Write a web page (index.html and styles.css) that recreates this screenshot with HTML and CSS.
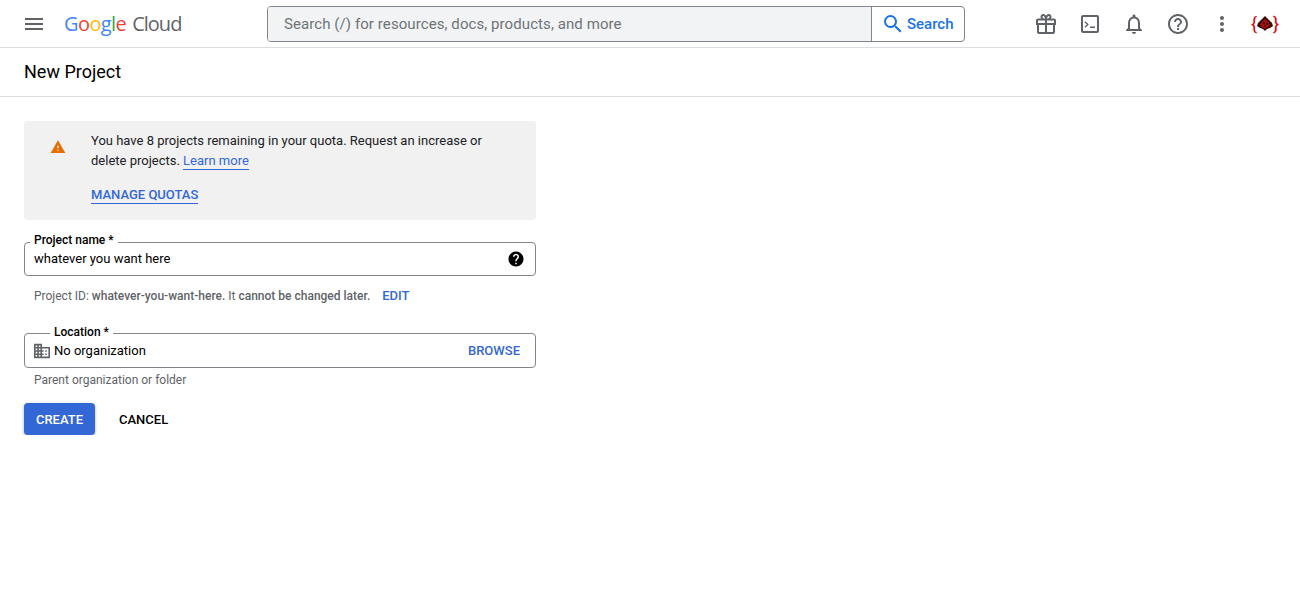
FILE: index.html
```html
<!DOCTYPE html>
<html lang="en">
<head>
  <meta charset="UTF-8" />
  <meta name="viewport" content="width=device-width, initial-scale=1.0" />
  <title>New Project</title>
  <link rel="stylesheet" href="styles.css">
</head>
<body>

  <!-- Top bar -->
  <header class="topbar">
    <button class="icon-btn menu-btn" aria-label="Menu">
      <svg width="24" height="24" viewBox="0 0 24 24"><path d="M3 18h18v-2H3v2zm0-5h18v-2H3v2zm0-7v2h18V6H3z"/></svg>
    </button>
    <div class="logo"><span class="blue">G</span><span class="red">o</span><span class="yellow">o</span><span class="blue">g</span><span class="green">l</span><span class="red">e</span><span class="cloud">Cloud</span></div>

    <form class="search">
      <div class="search-input">Search (/) for resources, docs, products, and more</div>
      <button class="search-btn" type="button">
        <svg width="24" height="24" viewBox="0 0 24 24"><path d="M15.5 14h-.79l-.28-.27A6.47 6.47 0 0 0 16 9.5 6.5 6.5 0 1 0 9.5 16c1.61 0 3.09-.59 4.23-1.57l.27.28v.79l5 4.99L20.49 19l-4.99-5zm-6 0C7.01 14 5 11.99 5 9.5S7.01 5 9.5 5 14 7.01 14 9.5 11.99 14 9.5 14z"/></svg>
        Search
      </button>
    </form>

    <div class="top-icons">
      <button class="icon-btn" aria-label="Gift">
        <svg width="24" height="24" viewBox="0 0 24 24"><path d="M20 6.500h-3.200c.4-.5.7-1.100.7-1.800C17.500 3.200 16.300 2 14.800 2c-1.100 0-2 .6-2.800 1.700C11.200 2.600 10.300 2 9.200 2 7.700 2 6.500 3.200 6.500 4.700c0 .7.300 1.300.7 1.800H4c-1.100 0-2 .9-2 2V13h1v7c0 1.100.9 2 2 2h14c1.100 0 2-.9 2-2v-7h1V8.500c0-1.100-.9-2-2-2zM14.800 4c.4 0 .7.300.7.700 0 .9-1 1.800-2.400 1.800h-.1c.3-1.300 1-2.500 1.800-2.500zM8.500 4.700c0-.4.300-.7.700-.7.800 0 1.500 1.200 1.800 2.500h-.1c-1.400 0-2.400-.9-2.400-1.800zM4 8.500h7V11H4V8.500zM5 20v-7h6v7H5zm14 0h-6v-7h6v7zm1-9h-7V8.500h7V11z"/></svg>
      </button>
      <button class="icon-btn" aria-label="Terminal">
        <svg width="24" height="24" viewBox="0 0 24 24"><path d="M19 3H5c-1.100 0-2 .9-2 2v14c0 1.100.9 2 2 2h14c1.100 0 2-.9 2-2V5c0-1.100-.9-2-2-2zm0 16H5V5h14v14zM7.400 15.700l-1-1L8.900 12.500 6.400 10.300l1-1 3.400 3.200-3.400 3.200zM12 14.500h5V16h-5v-1.500z"/></svg>
      </button>
      <button class="icon-btn" aria-label="Notifications">
        <svg width="24" height="24" viewBox="0 0 24 24"><path d="M12 22c1.100 0 2-.9 2-2h-4c0 1.100.9 2 2 2zm6-6v-5c0-3.070-1.630-5.640-4.500-6.320V4c0-.83-.67-1.500-1.500-1.500s-1.500.67-1.500 1.500v.68C7.640 5.360 6 7.920 6 11v5l-2 2v1h16v-1l-2-2zm-2 1H8v-6c0-2.480 1.510-4.500 4-4.500s4 2.020 4 4.500v6z"/></svg>
      </button>
      <button class="icon-btn" aria-label="Help">
        <svg width="24" height="24" viewBox="0 0 24 24"><path d="M11 18h2v-2h-2v2zm1-16C6.480 2 2 6.480 2 12s4.480 10 10 10 10-4.480 10-10S17.520 2 12 2zm0 18c-4.410 0-8-3.590-8-8s3.590-8 8-8 8 3.590 8 8-3.590 8-8 8zm0-14c-2.210 0-4 1.790-4 4h2c0-1.100.9-2 2-2s2 .9 2 2c0 2-3 1.750-3 5h2c0-2.250 3-2.500 3-5 0-2.210-1.790-4-4-4z"/></svg>
      </button>
      <button class="icon-btn" aria-label="More">
        <svg width="24" height="24" viewBox="0 0 24 24"><path d="M12 8c1.100 0 2-.9 2-2s-.9-2-2-2-2 .9-2 2 .9 2 2 2zm0 2c-1.100 0-2 .9-2 2s.9 2 2 2 2-.9 2-2-.9-2-2-2zm0 6c-1.100 0-2 .9-2 2s.9 2 2 2 2-.9 2-2-.9-2-2-2z"/></svg>
      </button>
      <div class="avatar">
        <span class="brace">{</span>
        <svg width="16" height="16" viewBox="0 0 16 16"><path fill="#3a0808" d="M8 0l3 3 4 4 1 3-3 2-3 1-2 2-2-2-3-1-3-2 1-3 4-4z"/><path fill="#a50f0f" d="M8 3l3 3 2 3-2 2-3 2-3-2-2-2 2-3z"/><path fill="#5a0a0a" d="M6 6h2v2H6zm3 1h2v2H9zM7 9h2v2H7z"/></svg>
        <span class="brace">}</span>
      </div>
    </div>
  </header>

  <div class="page-title">
    <h1>New Project</h1>
  </div>

  <main class="content">

    <!-- Quota notice -->
    <div class="notice">
      <svg class="notice-icon" width="16" height="16" viewBox="0 0 24 24"><path d="M1 21h22L12 2 1 21zm12-3h-2v-2h2v2zm0-4h-2v-4h2v4z"/></svg>
      <div>
        <p>You have 8 projects remaining in your quota. Request an increase or delete projects. <a href="#" class="link">Learn more</a></p>
        <a href="#" class="link manage">MANAGE QUOTAS</a>
      </div>
    </div>

    <!-- Project name -->
    <div class="field name-field">
      <label class="field-label">Project name *</label>
      <span class="field-value">whatever you want here</span>
      <svg class="help-icon" width="18" height="18" viewBox="0 0 24 24"><path d="M12 2C6.480 2 2 6.480 2 12s4.480 10 10 10 10-4.480 10-10S17.520 2 12 2zm1 17h-2v-2h2v2zm2.070-7.750-.9.920C13.450 12.900 13 13.500 13 15h-2v-.5c0-1.100.45-2.100 1.170-2.830l1.240-1.260c.37-.36.59-.86.59-1.410 0-1.100-.9-2-2-2s-2 .9-2 2H8c0-2.210 1.790-4 4-4s4 1.790 4 4c0 .88-.36 1.680-.93 2.250z"/></svg>
    </div>
    <div class="hint id-hint">
      Project ID: <b>whatever-you-want-here.</b> It <b>cannot be changed later.</b>
      <a href="#" class="action edit">EDIT</a>
    </div>

    <!-- Location -->
    <div class="field location-field">
      <label class="field-label">Location *</label>
      <svg class="org-icon" width="16" height="16" viewBox="2 3 20 18"><path d="M12 7V3H2v18h20V7H12zM6 19H4v-2h2v2zm0-4H4v-2h2v2zm0-4H4V9h2v2zm0-4H4V5h2v2zm4 12H8v-2h2v2zm0-4H8v-2h2v2zm0-4H8V9h2v2zm0-4H8V5h2v2zm10 12h-8v-2h2v-2h-2v-2h2v-2h-2V9h8v10zm-2-8h-2v2h2v-2zm0 4h-2v2h2v-2z"/></svg>
      <span class="field-value">No organization</span>
      <a href="#" class="action browse">BROWSE</a>
    </div>
    <div class="hint">Parent organization or folder</div>

    <div class="buttons">
      <button class="btn-create">CREATE</button>
      <button class="btn-cancel">CANCEL</button>
    </div>
  </main>

</body>
</html>
```

FILE: styles.css
```css
* {
  box-sizing: border-box;
}
body {
  margin: 0;
  background: #fff;
  color: #202124;
  font-family: Roboto, "Liberation Sans", sans-serif;
  font-size: 13px;
}
button {
  font-family: inherit;
  border: none;
  background: none;
  padding: 0;
}
a {
  text-decoration: none;
}

/* Top bar */
.topbar {
  display: flex;
  align-items: center;
  height: 48px;
  border-bottom: 1px solid #dadce0;
}
.icon-btn {
  display: flex;
  width: 24px;
  height: 24px;
  fill: #5f6368;
}
.menu-btn {
  margin-left: 22px;
}
.logo {
  margin-left: 18px;
  width: 203px;
  font-family: "Open Sans", sans-serif;
  font-size: 20px;
  letter-spacing: -0.6px;
  white-space: nowrap;
}
.blue { color: #4285f4; }
.red { color: #ea4335; }
.yellow { color: #fbbc05; }
.green { color: #34a853; }
.cloud {
  margin-left: 6px;
  color: #5f6368;
  letter-spacing: -1px;
}
.search {
  display: flex;
  width: 698px;
  height: 36px;
  margin-top: 1px;
  border: 1px solid #80868b;
  border-radius: 4px;
  overflow: hidden;
}
.search-input {
  flex: 1;
  padding-left: 16px;
  background: #f1f3f4;
  border-right: 1px solid #80868b;
  color: #6f7377;
  font-size: 15px;
  letter-spacing: 0.08px;
  line-height: 34px;
}
.search-btn {
  display: flex;
  align-items: center;
  gap: 2px;
  width: 92px;
  padding-left: 9px;
  color: #1a73e8;
  fill: #1a73e8;
  font-size: 15px;
  font-weight: 500;
}
.top-icons {
  display: flex;
  align-items: center;
  gap: 20px;
  margin-left: 69px;
}
.avatar {
  display: flex;
  align-items: center;
  justify-content: space-between;
  width: 25px;
  margin-left: -2px;
  color: #e00000;
  font-size: 18px;
}
.avatar svg {
  flex: none;
}
.brace {
  width: 5px;
  margin: 0 -1px;
  line-height: 1;
}

/* Page title */
.page-title {
  height: 49px;
  padding-left: 24px;
  border-bottom: 1px solid #dadce0;
}
.page-title h1 {
  margin: 0;
  font-size: 18px;
  font-weight: 400;
  line-height: 47px;
  color: #000;
}

/* Form column */
.content {
  width: 512px;
  margin: 24px 0 0 24px;
}
.notice {
  display: flex;
  height: 99px;
  padding: 10px 24px 0 26px;
  background: #f1f1f1;
  border-radius: 4px;
}
.notice-icon {
  flex: none;
  margin: 8px 25px 0 0;
  fill: #e56e00;
}
.notice p {
  margin: 0 0 16px;
  line-height: 20px;
}
.link {
  color: #3367d6;
  border-bottom: 1px solid #3367d6;
  padding-bottom: 1px;
}
.manage {
  font-size: 13px;
  font-weight: 500;
}

.field {
  position: relative;
  display: flex;
  align-items: center;
  border: 1px solid #80868b;
  border-radius: 4px;
  padding: 0 15px 0 9px;
  color: #000;
}
.name-field {
  height: 34px;
  margin-top: 22px;
  padding-bottom: 2px;
}
.location-field {
  height: 35px;
  margin-top: 29px;
}
.field-label {
  position: absolute;
  top: -11px;
  left: 5px;
  padding: 0 4px;
  background: #fff;
  font-size: 12px;
  font-weight: 500;
  line-height: 16px;
}
.location-field .field-label {
  top: -10px;
  left: 25px;
}
.field-value {
  flex: 1;
}
.help-icon {
  margin: 2px -5px 0 0;
  fill: #000;
}
.org-icon {
  margin: 0 4px 0 0;
  fill: #5f6368;
}
.hint {
  padding-left: 10px;
  color: #5f6368;
  font-size: 12px;
  line-height: 16px;
  margin-top: 4px;
}
.id-hint {
  margin-top: 12px;
}
.id-hint b {
  font-weight: 500;
}
.action {
  color: #3367d6;
  font-size: 12px;
  font-weight: 500;
}
.browse {
  font-size: 13px;
}
.edit {
  margin-left: 9px;
  font-size: 13px;
}
.buttons {
  display: flex;
  align-items: center;
  gap: 24px;
  margin-top: 15px;
}
.btn-create {
  width: 71px;
  height: 32px;
  background: #3367d6;
  border-radius: 4px;
  box-shadow: 0 1px 3px rgba(60, 64, 67, 0.45);
  color: #fff;
  font-size: 13px;
  font-weight: 500;
}
.btn-cancel {
  color: #000;
  font-size: 13px;
  font-weight: 500;
}
```
